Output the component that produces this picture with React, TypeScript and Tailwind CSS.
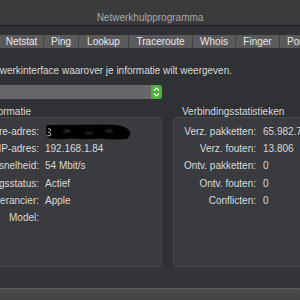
import React from 'react'

const tabs = [
  { label: 'Netstat', w: 'w-[43px]' },
  { label: 'Ping', w: 'w-[35px]' },
  { label: 'Lookup', w: 'w-[50px]' },
  { label: 'Traceroute', w: 'w-[64px]' },
  { label: 'Whois', w: 'w-[43px]' },
  { label: 'Finger', w: 'w-[44px]' },
  { label: 'Port Scan', w: 'w-[60px]' },
]

const infoRows: [string, React.ReactNode][] = [
  ['Hardware-adres:', <Redacted key="r" />],
  ['IP-adres:', '192.168.1.84'],
  ['Koppelingssnelheid:', '54 Mbit/s'],
  ['Koppelingsstatus:', 'Actief'],
  ['Leverancier:', 'Apple'],
  ['Model:', ''],
]

const statRows: [string, string][] = [
  ['Verz. pakketten:', '65.982.745'],
  ['Verz. fouten:', '13.806'],
  ['Ontv. pakketten:', '0'],
  ['Ontv. fouten:', '0'],
  ['Conflicten:', '0'],
]

// scribbled-out hardware address
function Redacted() {
  return (
    <svg viewBox="0 0 86 16" className="w-[86px] h-[16px] shrink-0 block">
      <path
        d="M2 1 L60 0.5 L72 1 Q80 2 84 6 Q87 11 82 15 Q68 16 54 14.5 Q40 16 26 14.5 Q12 16 3 14 Q0 8 2 1 Z"
        fill="#000"
      />
      <path d="M3 5 Q5 4 6 6 Q5 8 3.5 8.5 Q6 9 6 11 Q4 12.5 2.5 11.5" fill="none" stroke="#bdbdbd" strokeWidth="1" />
      <ellipse cx="22" cy="7" rx="4" ry="2" fill="#1c1c1c" />
      <ellipse cx="44" cy="9" rx="5" ry="2" fill="#161616" />
      <ellipse cx="64" cy="7" rx="4" ry="2" fill="#1a1a1a" />
    </svg>
  )
}

function Chevrons() {
  return (
    <svg width="11" height="14" viewBox="0 0 11 14">
      <path d="M3 5.5 L5.5 3 L8 5.5" fill="none" stroke="#fff" strokeWidth="1.1" />
      <path d="M3 8.5 L5.5 11 L8 8.5" fill="none" stroke="#fff" strokeWidth="1.1" />
    </svg>
  )
}

export default function App() {
  return (
    <div className="w-[300px] h-[300px] overflow-hidden flex flex-col bg-[#303134] font-['Liberation_Sans',Arial,sans-serif] text-[10px] text-[#dadada]">
      {/* title bar */}
      <div className="h-[26px] shrink-0 flex items-center justify-center pt-[9px] bg-[#3b3b3d] border-b border-[#1d1d1f] text-[#a9a9a9]">
        Netwerkhulpprogramma
      </div>

      {/* tabs */}
      <div className="mt-[9px] h-[13px] shrink-0 flex bg-[#5a5a5c] whitespace-nowrap">
        {tabs.map((t, i) => (
          <div
            key={t.label}
            className={`${t.w} shrink-0 flex items-center ${i === tabs.length - 1 ? 'pl-[7px]' : 'justify-center'} ${i > 0 ? 'border-l border-[#424244]' : ''} text-[#e8e8e8]`}
          >
            {t.label}
          </div>
        ))}
      </div>

      {/* instruction */}
      <div className="mt-[15px] w-[232px] h-[14px] flex justify-end items-center whitespace-nowrap">
        Selecteer een netwerkinterface waarover je informatie wilt weergeven.
      </div>

      {/* interface popup */}
      <div className="mt-[8px] -ml-[20px] w-[182px] h-[14px] flex rounded-[3px] overflow-hidden">
        <div className="flex-1 bg-[#666668]" />
        <div className="w-[11px] bg-[#4fb13a] flex items-center justify-center">
          <Chevrons />
        </div>
      </div>

      {/* group labels */}
      <div className="mt-[6px] h-[12px] flex items-center whitespace-nowrap">
        <div className="w-[31px] flex justify-end">Informatie</div>
        <div className="ml-[151px]">Verbindingsstatistieken</div>
      </div>

      {/* boxes */}
      <div className="h-[150px] shrink-0 flex gap-[11px]">
        <div className="-ml-[10px] w-[172px] shrink-0 rounded-[4px] border border-[#48494c] bg-[#3a3b3e] pt-[5px]">
          <div className="grid grid-cols-[48px_116px] gap-x-[6px]">
            {infoRows.map(([label, value]) => (
              <React.Fragment key={label}>
                <div className="h-[17.2px] flex items-center justify-end whitespace-nowrap">{label}</div>
                <div className="h-[17.2px] flex items-center whitespace-nowrap">{value}</div>
              </React.Fragment>
            ))}
          </div>
        </div>
        <div className="w-[150px] shrink-0 rounded-[4px] border border-[#48494c] bg-[#3a3b3e] pt-[5px]">
          <div className="grid grid-cols-[82px_1fr] gap-x-[7px]">
            {statRows.map(([label, value]) => (
              <React.Fragment key={label}>
                <div className="h-[17.2px] flex items-center justify-end whitespace-nowrap">{label}</div>
                <div className="h-[17.2px] flex items-center whitespace-nowrap">{value}</div>
              </React.Fragment>
            ))}
          </div>
        </div>
      </div>

      {/* bottom */}
      <div className="h-[21px] shrink-0 bg-[#343538]" />
      <div className="flex-1 border-t border-[#5e5e5e] bg-gradient-to-b from-[#505050] to-[#404040]" />
    </div>
  )
}
